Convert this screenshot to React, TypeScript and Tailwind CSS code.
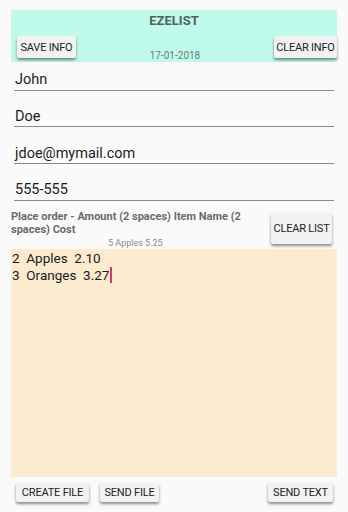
import React from "react";

const font = { fontFamily: "Roboto, 'Liberation Sans', sans-serif" };

function Btn({ label, className = "" }: { label: string; className?: string }) {
  return (
    <button
      className={`bg-[#f2f2f2] text-[#222] text-[11px] leading-none whitespace-nowrap tracking-[-0.2px] px-0 rounded-[2px] shadow-[0_2px_3px_rgba(0,0,0,0.45)] flex items-center justify-center ${className}`}
    >
      {label}
    </button>
  );
}

function Field({ value }: { value: string }) {
  return (
    <div className="mx-[3px] h-[36.7px] flex items-end border-b border-[#8a8a8a] pb-[2px] pl-[1px] text-[14.5px] text-[#1c1c1c] leading-none">
      {value}
    </div>
  );
}

export default function App() {
  return (
    <div className="w-[348px] h-[512px] bg-[#fafafa] px-[11px] pt-[10px] flex flex-col overflow-hidden" style={font}>
      <div className="bg-[#c0faea] h-[52px] flex flex-col">
        <div className="text-center text-[13px] font-bold text-[#4e6360] leading-none pt-[4px]">EZELIST</div>
        <div className="flex items-start justify-between px-[6px] pt-[9px]">
          <Btn label="SAVE INFO" className="w-[59px] h-[22px]" />
          <div className="text-[10px] text-[#6d7b79] leading-none pt-[15px]">17-01-2018</div>
          <Btn label="CLEAR INFO" className="w-[63px] h-[22px] mr-[-6px]" />
        </div>
      </div>

      <div className="mt-[-8px]">
        <Field value="John" />
        <Field value="Doe" />
        <Field value="jdoe@mymail.com" />
        <Field value="555-555" />
      </div>

      <div className="flex items-start justify-between pt-[9px]">
        <div className="w-[255px]">
          <div className="text-[11px] font-bold text-[#6b6b6b] leading-[13px]">
            Place order - Amount (2 spaces) Item Name (2 spaces) Cost
          </div>
          <div className="text-[9px] text-[#8a8a8a] leading-none pl-[97px] pt-[3px]">5 Apples 5.25</div>
        </div>
        <Btn label="CLEAR LIST" className="w-[61px] h-[31px] mt-[3px] mr-[5px]" />
      </div>

      <div className="bg-[#fcebcf] h-[228px] mt-[1px] px-[1px] pt-[1px] text-[13.5px] text-[#1a1a1a] leading-[17px] whitespace-pre">
        <div>2  Apples  2.10</div>
        <div className="flex items-center">
          3  Oranges  3.27<span className="inline-block w-[1.5px] h-[16px] bg-[#e0306a] ml-[1px]" />
        </div>
      </div>

      <div className="flex items-center pt-[6px] px-[5px]">
        <Btn label="CREATE FILE" className="w-[73px] h-[19px]" />
        <Btn label="SEND FILE" className="w-[59px] h-[19px] ml-[11px]" />
        <Btn label="SEND TEXT" className="w-[65px] h-[19px] ml-auto mr-[-1px]" />
      </div>
    </div>
  );
}
